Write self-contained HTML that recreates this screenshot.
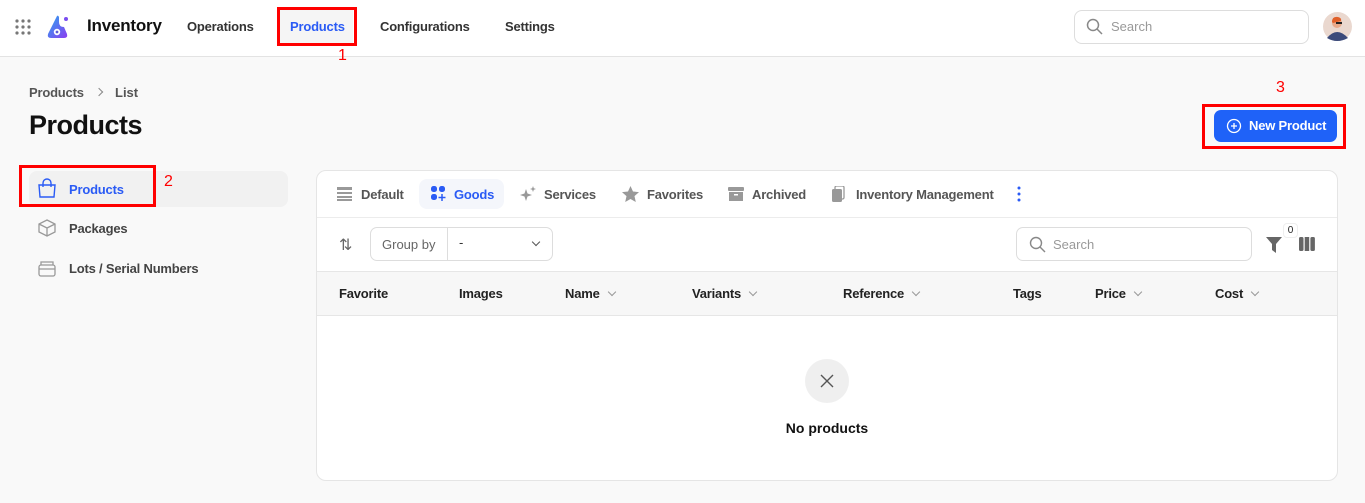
<!DOCTYPE html>
<html><head><meta charset="utf-8"><style>
*{box-sizing:border-box;margin:0;padding:0}
body{width:1365px;height:503px;overflow:hidden;background:#f9f9f9;font-family:"Liberation Sans",sans-serif;color:#222;position:relative}
.abs{position:absolute}
.hdr{position:absolute;left:0;top:0;width:1365px;height:57px;background:#fff;border-bottom:1px solid #e3e3e3}
.nav{position:absolute;top:19px;font-size:13px;font-weight:bold;color:#333;letter-spacing:-0.2px}
.red{position:absolute;border:3px solid #f00}
.rn{position:absolute;color:#f00;font-size:16px}
.card{position:absolute;left:316px;top:170px;width:1022px;height:311px;background:#fff;border:1px solid #e5e5e5;border-radius:10px;overflow:hidden}
.tab{position:absolute;top:16px;font-size:13px;color:#555;font-weight:bold;letter-spacing:-0.2px}
.th{position:absolute;top:115px;font-size:13px;font-weight:bold;color:#222;letter-spacing:-0.2px}
.chev{display:inline-block;width:6px;height:6px;border-right:1.3px solid #999;border-bottom:1.3px solid #999;transform:rotate(45deg);margin-left:9px;position:relative;top:-3px}
.side{position:absolute;left:69px;font-size:13px;font-weight:bold;color:#444;letter-spacing:-0.2px}
</style></head><body>
<div class="hdr">
  <svg class="abs" style="left:15px;top:19px" width="16" height="16" fill="#777"><g><circle cx="2" cy="2" r="1.6"/><circle cx="8" cy="2" r="1.6"/><circle cx="14" cy="2" r="1.6"/><circle cx="2" cy="8" r="1.6"/><circle cx="8" cy="8" r="1.6"/><circle cx="14" cy="8" r="1.6"/><circle cx="2" cy="14" r="1.6"/><circle cx="8" cy="14" r="1.6"/><circle cx="14" cy="14" r="1.6"/></g></svg>
  <svg class="abs" style="left:45px;top:14px" width="26" height="26" viewBox="0 0 26 26"><defs><linearGradient id="g" x1="0" y1="0" x2="1" y2="1"><stop offset="0" stop-color="#2aa6f0"/><stop offset="1" stop-color="#8b3df0"/></linearGradient></defs><path d="M12 2 Q13 1 14 3 L14 8 Q14 13 19 13 L22 20 Q23 24 19 24 L6 24 Q2 24 3 20 Z" fill="url(#g)"/><circle cx="12" cy="18" r="3.2" fill="#fff"/><circle cx="12" cy="18" r="1.4" fill="#5a5ad8"/><circle cx="21" cy="5" r="2" fill="#7a4df0"/></svg>
  <div class="abs" style="left:87px;top:16px;font-size:17px;font-weight:bold;color:#111;letter-spacing:-0.2px">Inventory</div>
  <div class="nav" style="left:187px">Operations</div>
  <div class="abs" style="left:280px;top:9px;width:73px;height:35px;background:#f5f5f5"></div>
  <div class="nav" style="left:290px;color:#2a5bf5">Products</div>
  <div class="red" style="left:277px;top:7px;width:80px;height:39px"></div>
  <div class="rn" style="left:338px;top:47px">1</div>
  <div class="nav" style="left:380px">Configurations</div>
  <div class="nav" style="left:505px">Settings</div>
  <div class="abs" style="left:1074px;top:10px;width:235px;height:34px;border:1px solid #ddd;border-radius:8px;background:#fff"></div>
  <svg class="abs" style="left:1086px;top:18px" width="17" height="17" fill="none" stroke="#888" stroke-width="1.5"><circle cx="7" cy="7" r="5.5"/><path d="M11 11l5 5"/></svg>
  <div class="abs" style="left:1111px;top:19px;font-size:13px;color:#999">Search</div>
  <svg class="abs" style="left:1323px;top:12px" width="29" height="29"><circle cx="14.5" cy="14.5" r="14.5" fill="#ead8cf"/><path d="M4 26 Q14 14 25 26 Q14 32 4 26Z" fill="#3b4a7a"/><circle cx="14" cy="11" r="5" fill="#e8a98a"/><path d="M9 10 Q9 4 15 5 Q19 6 18 9 L10 11Z" fill="#e0602a"/><rect x="13" y="10" width="6" height="2" fill="#222"/></svg>
</div>

<div class="abs" style="left:29px;top:85px;font-size:13px;color:#555;font-weight:bold;letter-spacing:-0.2px">Products</div>
<div class="abs" style="left:96px;top:89px;width:6px;height:6px;border-right:1.3px solid #888;border-top:1.3px solid #888;transform:rotate(45deg)"></div>
<div class="abs" style="left:115px;top:85px;font-size:13px;color:#555;font-weight:bold">List</div>
<div class="abs" style="left:29px;top:110px;font-size:27px;font-weight:bold;color:#111;letter-spacing:-0.5px">Products</div>

<div class="rn" style="left:1276px;top:79px">3</div>
<div class="abs" style="left:1214px;top:110px;width:123px;height:32px;background:#1f62f8;border-radius:7px"></div>
<svg class="abs" style="left:1226px;top:118px" width="16" height="16" fill="none" stroke="#fff" stroke-width="1.3"><circle cx="8" cy="8" r="6.5"/><path d="M8 5v6M5 8h6"/></svg>
<div class="abs" style="left:1249px;top:118px;font-size:13px;font-weight:bold;color:#fff;letter-spacing:-0.2px">New Product</div>
<div class="red" style="left:1202px;top:104px;width:144px;height:45px"></div>

<div class="abs" style="left:29px;top:171px;width:259px;height:36px;background:#f1f1f1;border-radius:8px"></div>
<svg class="abs" style="left:37px;top:178px" width="20" height="21" fill="none" stroke="#2a5bf5" stroke-width="1.4"><path d="M2 7h16l-1 12H3Z"/><path d="M6 9V5a4 4 0 0 1 8 0v4"/></svg>
<div class="side" style="top:182px;color:#2a5bf5">Products</div>
<div class="red" style="left:19px;top:165px;width:137px;height:42px"></div>
<div class="rn" style="left:164px;top:173px">2</div>
<svg class="abs" style="left:37px;top:218px" width="20" height="20" fill="none" stroke="#999" stroke-width="1.3"><path d="M10 2l8 4v8l-8 4-8-4V6Z M2 6l8 4 8-4 M10 10v8"/></svg>
<div class="side" style="top:221px">Packages</div>
<svg class="abs" style="left:37px;top:258px" width="20" height="20" fill="none" stroke="#999" stroke-width="1.3"><rect x="2" y="7" width="16" height="11" rx="2"/><path d="M4 7V4h12v3 M2 11h16"/></svg>
<div class="side" style="top:261px">Lots / Serial Numbers</div>

<div class="card">
  <div class="abs" style="left:102px;top:8px;width:85px;height:30px;background:#f4f6fb;border-radius:8px"></div>
  <svg class="abs" style="left:20px;top:16px" width="15" height="14" fill="#999"><rect y="0" width="15" height="3"/><rect y="5" width="15" height="2"/><rect y="9" width="15" height="2"/><rect y="12" width="15" height="2"/></svg>
  <div class="tab" style="left:44px">Default</div>
  <svg class="abs" style="left:114px;top:15px" width="16" height="16" fill="#2a5bf5"><rect x="0" y="0" width="6" height="6" rx="2.5"/><rect x="8" y="0" width="6" height="6" rx="2.5"/><rect x="0" y="8" width="6" height="6" rx="2.5"/><path d="M11 8v7M7.5 11.5h7" stroke="#2a5bf5" stroke-width="1.5"/></svg>
  <div class="tab" style="left:137px;color:#2a5bf5">Goods</div>
  <svg class="abs" style="left:202px;top:15px" width="18" height="18" fill="#999"><path d="M7 3l1.5 4.5L13 9l-4.5 1.5L7 15l-1.5-4.5L1 9l4.5-1.5Z"/><path d="M14 0l.8 2.2L17 3l-2.2.8L14 6l-.8-2.2L11 3l2.2-.8Z"/></svg>
  <div class="tab" style="left:227px">Services</div>
  <svg class="abs" style="left:305px;top:15px" width="17" height="16" fill="#999"><path d="M8.5 0l2.5 5.5 6 .6-4.5 4 1.3 5.9-5.3-3-5.3 3 1.3-5.9L0 6.1l6-.6Z"/></svg>
  <div class="tab" style="left:330px">Favorites</div>
  <svg class="abs" style="left:411px;top:16px" width="16" height="14" fill="#999"><rect x="0" y="0" width="16" height="4" rx="1"/><path d="M1 5h14v9H1Z"/><rect x="6" y="7" width="4" height="1.5" fill="#fff"/></svg>
  <div class="tab" style="left:435px">Archived</div>
  <svg class="abs" style="left:515px;top:15px" width="14" height="17" fill="#999"><rect x="3" y="0" width="9" height="13" rx="1.5" fill="none" stroke="#999" stroke-width="1.3"/><rect x="0" y="3" width="10" height="13" rx="1.5"/></svg>
  <div class="tab" style="left:539px">Inventory Management</div>
  <svg class="abs" style="left:700px;top:15px" width="4" height="16" fill="#2a5bf5"><circle cx="2" cy="2" r="1.5"/><circle cx="2" cy="8" r="1.5"/><circle cx="2" cy="14" r="1.5"/></svg>

  <div class="abs" style="left:0;top:46px;width:100%;height:1px;background:#ececec"></div>
  <div class="abs" style="left:22px;top:64px;font-size:16px;color:#666">⇅</div>
  <div class="abs" style="left:53px;top:56px;width:183px;height:34px;border:1px solid #ddd;border-radius:7px"></div>
  <div class="abs" style="left:130px;top:57px;width:1px;height:32px;background:#ddd"></div>
  <div class="abs" style="left:65px;top:66px;font-size:13px;color:#666">Group by</div>
  <div class="abs" style="left:142px;top:64px;font-size:13px;color:#333">-</div>
  <div class="abs" style="left:216px;top:68px;width:6px;height:6px;border-right:1.3px solid #555;border-bottom:1.3px solid #555;transform:rotate(45deg)"></div>
  <div class="abs" style="left:699px;top:56px;width:236px;height:34px;border:1px solid #ddd;border-radius:7px"></div>
  <svg class="abs" style="left:712px;top:65px" width="17" height="17" fill="none" stroke="#888" stroke-width="1.4"><circle cx="7" cy="7" r="5.5"/><path d="M11 11l5 5"/></svg>
  <div class="abs" style="left:736px;top:66px;font-size:13px;color:#999">Search</div>
  <svg class="abs" style="left:949px;top:66px" width="16" height="16" fill="#666"><path d="M0 0h16l-6 7v9l-4-3V7Z"/></svg>
  <div class="abs" style="left:966px;top:52px;width:15px;height:15px;border:1px solid #eee;border-radius:4px;background:#fff;font-size:10px;text-align:center;line-height:13px">0</div>
  <svg class="abs" style="left:982px;top:66px" width="16" height="14" fill="#666"><rect x="0" y="0" width="4.5" height="14" rx="1.5"/><rect x="5.7" y="0" width="4.5" height="14"/><rect x="11.4" y="0" width="4.5" height="14" rx="1.5"/></svg>

  <div class="abs" style="left:0;top:100px;width:100%;height:45px;background:#f7f7f7;border-top:1px solid #e6e6e6;border-bottom:1px solid #e6e6e6"></div>
  <div class="th" style="left:22px">Favorite</div>
  <div class="th" style="left:142px">Images</div>
  <div class="th" style="left:248px">Name<span class="chev"></span></div>
  <div class="th" style="left:375px">Variants<span class="chev"></span></div>
  <div class="th" style="left:526px">Reference<span class="chev"></span></div>
  <div class="th" style="left:696px">Tags</div>
  <div class="th" style="left:778px">Price<span class="chev"></span></div>
  <div class="th" style="left:898px">Cost<span class="chev"></span></div>

  <div class="abs" style="left:488px;top:188px;width:44px;height:44px;border-radius:50%;background:#efefef"></div>
  <svg class="abs" style="left:503px;top:203px" width="14" height="14" stroke="#555" stroke-width="1.4"><path d="M1 1l12 12M13 1L1 13"/></svg>
  <div class="abs" style="left:0;width:100%;top:249px;text-align:center;font-size:14px;font-weight:bold;color:#111">No products</div>
</div>
</body></html>
